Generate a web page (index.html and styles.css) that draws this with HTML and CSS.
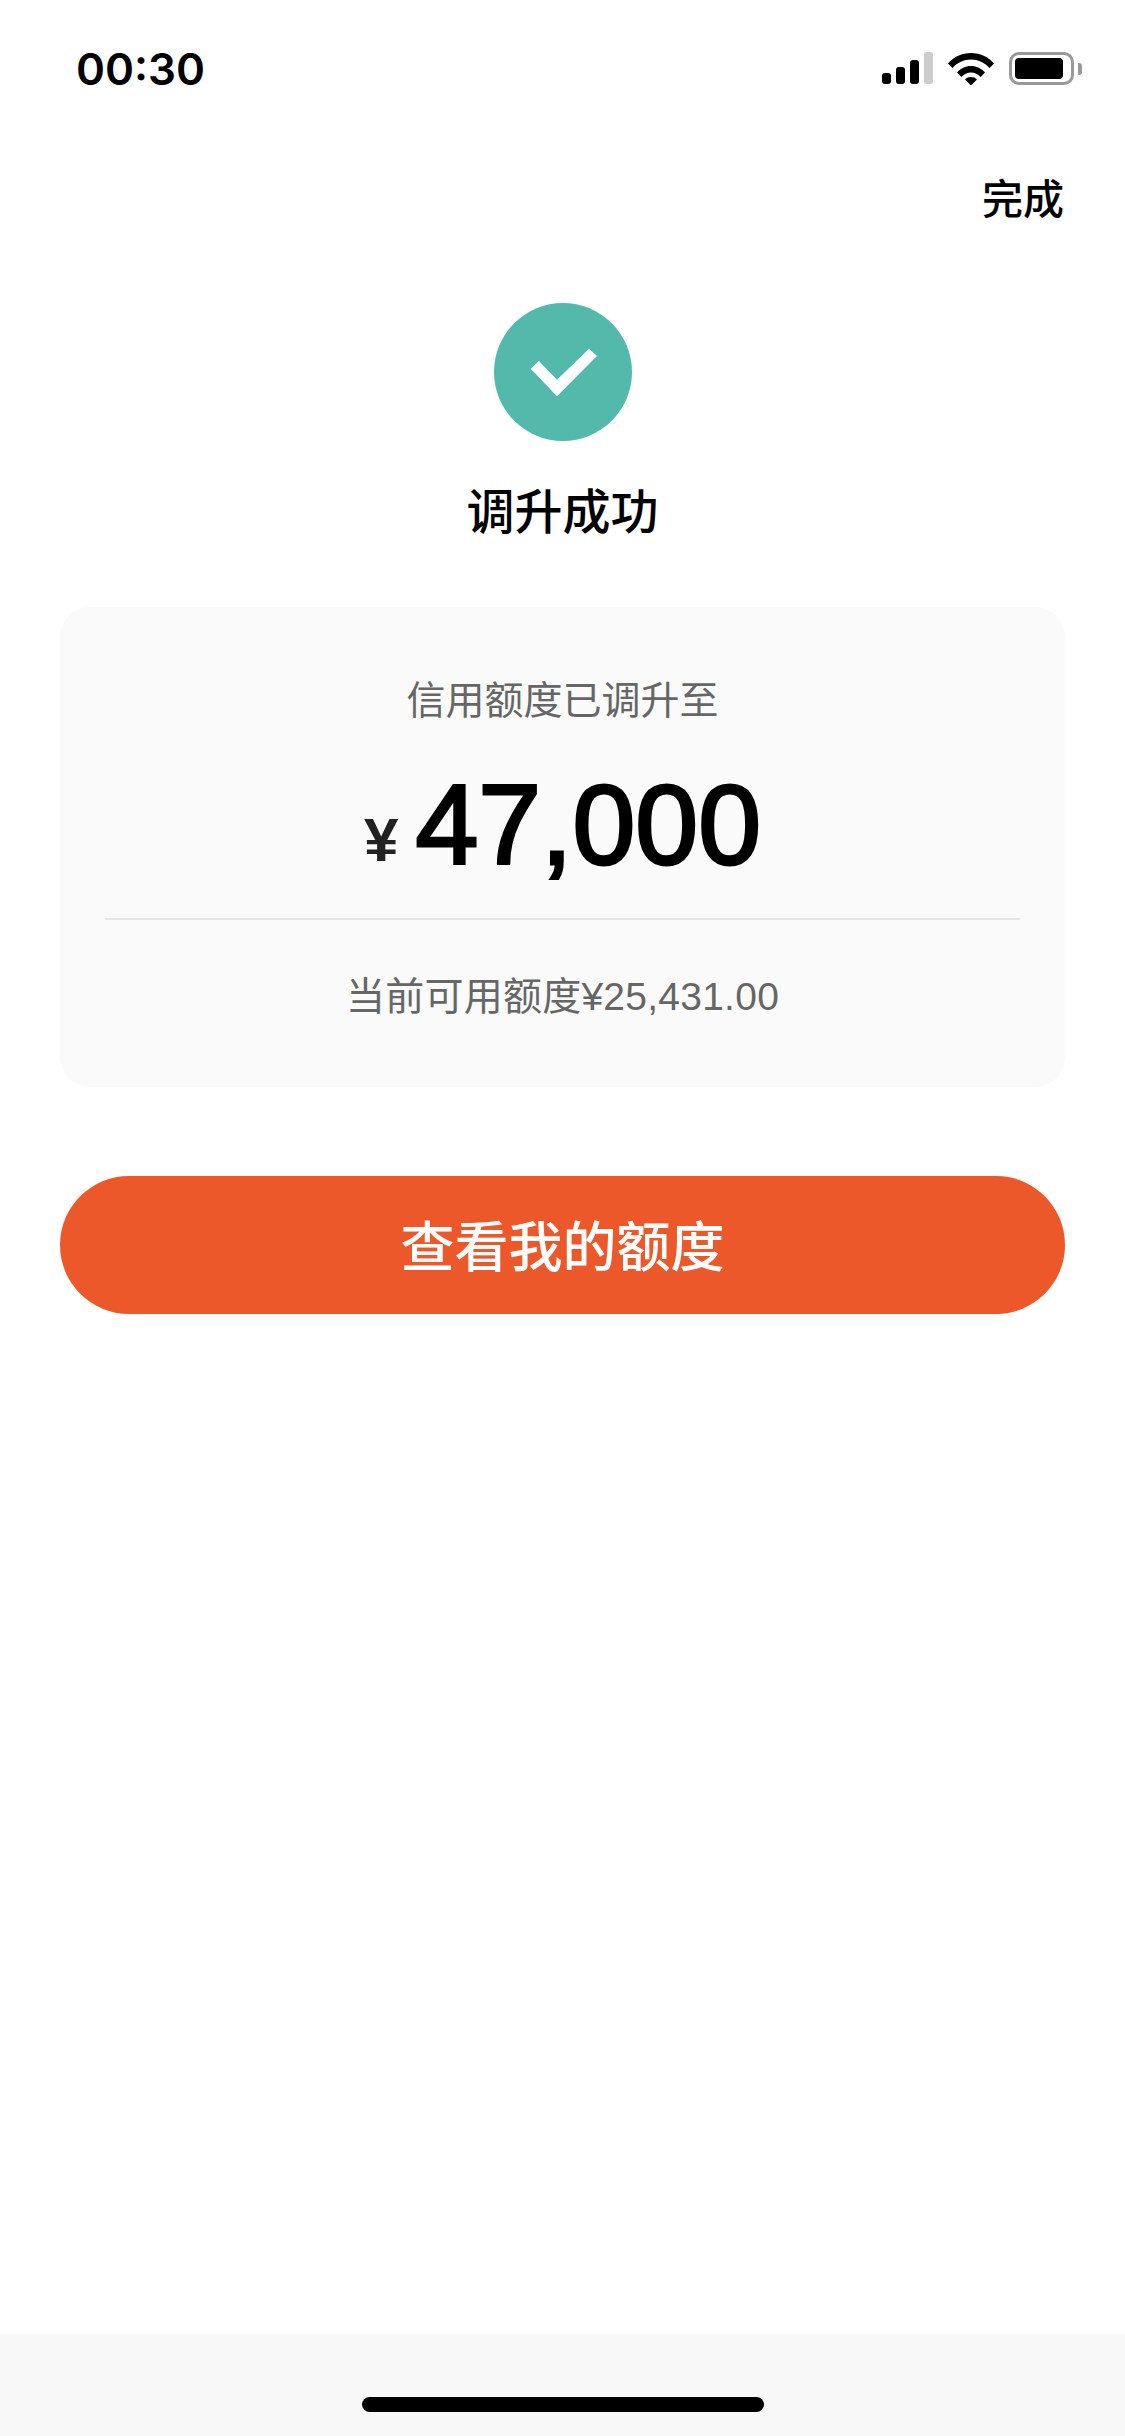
FILE: index.html
```html
<!DOCTYPE html>
<html lang="zh-CN">
<head>
    <meta charset="UTF-8">
    <meta name="viewport" content="width=device-width, initial-scale=1.0">
    <title>调升成功</title>
    <link rel="stylesheet" href="styles.css">
</head>
<body>
    <div class="page">
        <div class="status-bar">
            <span class="time">00:30</span>
            <div class="status-icons">
                <div class="signal">
                    <span class="bar bar-1"></span>
                    <span class="bar bar-2"></span>
                    <span class="bar bar-3"></span>
                    <span class="bar bar-4"></span>
                </div>
                <svg class="wifi" width="46" height="33" viewBox="0 0 46 33">
                    <path d="M0 11.500C6 4.500 14 1 23 1s17 3.500 23 10.500l-4.500 4.500C36.500 10.500 30 7.500 23 7.500S9.500 10.500 4.500 16z" fill="#000"/>
                    <path d="M9 20.500C12.500 16.500 17.500 14 23 14s10.500 2.500 14 6.500l-4.500 4.500C30 22 26.700 20.500 23 20.500S16 22 13.500 25z" fill="#000"/>
                    <path d="M17 27.500c1.500-1.700 3.600-2.500 6-2.500s4.500.8 6 2.500L23 33.500z" fill="#000"/>
                </svg>
                <div class="battery">
                    <div class="battery-body"><span class="battery-level"></span></div>
                    <span class="battery-cap"></span>
                </div>
            </div>
        </div>

        <div class="nav">
            <span class="nav-done">完成</span>
        </div>

        <div class="result">
            <svg class="check" width="138" height="138" viewBox="0 0 138 138">
                <circle cx="69" cy="69" r="69" fill="#53b9ab"/>
                <path d="M36.700 65.700L45 58 63 76.700 95 45.700 103 53 63 93.300z" fill="#fff"/>
            </svg>
            <h2 class="result-title">调升成功</h2>
        </div>

        <div class="card">
            <p class="card-label">信用额度已调升至</p>
            <div class="amount">
                <span class="amount-unit">¥</span>
                <span class="amount-value">47,000</span>
            </div>
            <div class="divider"></div>
            <p class="card-note">当前可用额度¥25,431.00</p>
        </div>

        <button class="main-btn" type="button">查看我的额度</button>

        <div class="home-area">
            <span class="home-indicator"></span>
        </div>
    </div>
</body>
</html>
```

FILE: styles.css
```css
* {
    box-sizing: border-box;
}
html, body {
    margin: 0;
    padding: 0;
    background: #fff;
}
body {
    font-family: "Liberation Sans", "Noto Sans CJK SC", sans-serif;
    color: #000;
}
.page {
    width: 1125px;
    height: 2436px;
    display: flex;
    flex-direction: column;
}

.status-bar {
    height: 138px;
    padding: 47px 43px 0 76px;
    display: flex;
    justify-content: space-between;
    align-items: flex-start;
}
.time {
    font-family: Inter, "Liberation Sans", sans-serif;
    font-size: 44px;
    font-weight: 600;
    line-height: 44px;
}
.status-icons {
    display: flex;
    align-items: flex-start;
    padding-top: 5px;
}
.signal {
    display: flex;
    align-items: flex-end;
    gap: 5px;
    height: 32px;
    margin-right: 15px;
}
.bar {
    width: 9px;
    background: #000;
    border-radius: 3px;
}
.bar-1 { height: 11px; }
.bar-2 { height: 17px; }
.bar-3 { height: 24px; }
.bar-4 { height: 32px; background: #ccc; }
.wifi {
    margin-right: 15px;
}
.battery {
    display: flex;
    align-items: center;
    gap: 4px;
}
.battery-body {
    width: 65px;
    height: 33px;
    border: 3px solid #999;
    border-radius: 10px;
    padding: 3px 8px 3px 3px;
}
.battery-level {
    display: block;
    height: 100%;
    background: #000;
    border-radius: 4px;
}
.battery-cap {
    width: 4px;
    height: 12px;
    background: #999;
    border-radius: 0 3px 3px 0;
}

.nav {
    height: 165px;
    padding: 36px 61px 0 0;
    display: flex;
    justify-content: flex-end;
    align-items: flex-start;
}
.nav-done {
    font-size: 41px;
    font-weight: 500;
    line-height: 52px;
}

.result {
    display: flex;
    flex-direction: column;
    align-items: center;
}
.check {
    display: block;
}
.result-title {
    margin: 39px 0 0;
    font-size: 48px;
    font-weight: 500;
    line-height: 66px;
}

.card {
    margin: 61px 60px 0;
    height: 480px;
    padding: 69px 45px 0;
    background: #fafafa;
    border-radius: 30px;
    text-align: center;
}
.card-label, .card-note {
    margin: 0;
    font-size: 39px;
    line-height: 50px;
    color: #666;
}
.amount {
    margin-top: 34px;
    height: 130px;
    display: flex;
    justify-content: center;
    align-items: baseline;
    gap: 17px;
    line-height: 130px;
}
.amount-unit {
    font-size: 62px;
    font-weight: bold;
    color: #222;
    transform: translateY(-3px);
}
.amount-value {
    font-size: 113px;
    -webkit-text-stroke: 3px #000;
}
.divider {
    height: 2px;
    margin-top: 28px;
    background: #e6e6e6;
}
.card-note {
    margin-top: 52px;
    letter-spacing: 0.25px;
}

.main-btn {
    display: block;
    width: 1005px;
    height: 138px;
    margin: 89px 60px 0;
    padding: 0 0 4px;
    border: none;
    border-radius: 69px;
    background: #ec5829;
    color: #fff;
    font-family: inherit;
    font-size: 54px;
    font-weight: 500;
    cursor: pointer;
}

.home-area {
    margin-top: auto;
    height: 102px;
    padding-top: 63px;
    background: #f8f8f8;
    display: flex;
    justify-content: center;
    align-items: flex-start;
}
.home-indicator {
    width: 402px;
    height: 15px;
    border-radius: 8px;
    background: #000;
}
```
